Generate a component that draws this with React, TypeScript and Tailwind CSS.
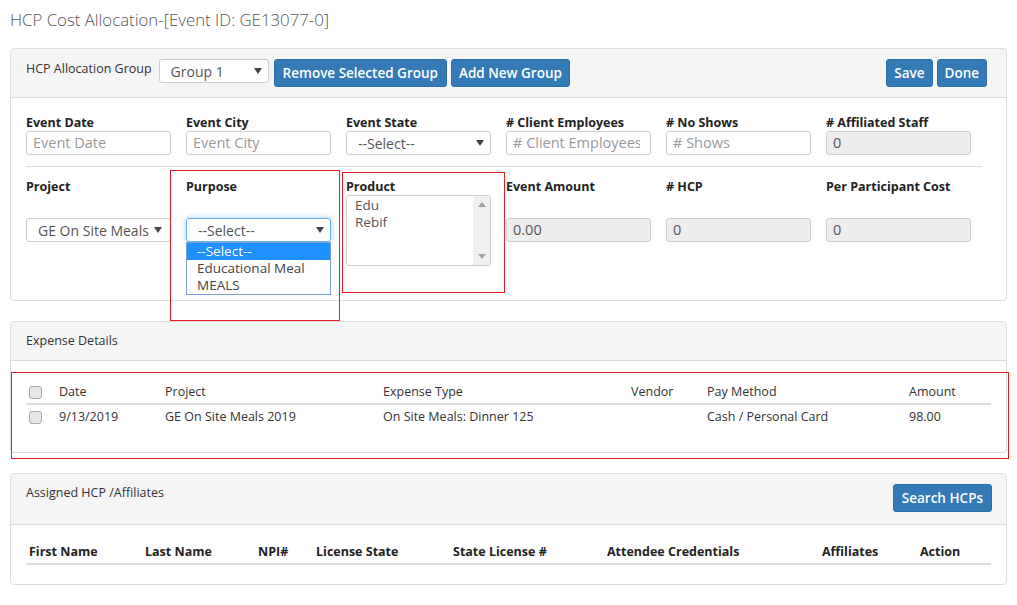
import React from "react";

const Arrow = () => (
  <svg width="8" height="6" viewBox="0 0 8 6" className="shrink-0">
    <path d="M0 0 L8 0 L4 6 Z" fill="#444" />
  </svg>
);

const Select = ({ value, className = "", focus = false }: { value: string; className?: string; focus?: boolean }) => (
  <div
    className={`flex items-center justify-between gap-[4px] h-[24px] rounded-[3px] bg-white pl-[11px] pr-[6px] text-[14px] border ${
      focus ? "border-[#66afe9] shadow-[0_0_6px_rgba(102,175,233,0.6)]" : "border-[#ccc]"
    } ${className}`}
  >
    <span className="text-[#555] whitespace-nowrap overflow-hidden">{value}</span>
    <Arrow />
  </div>
);

const Input = ({ placeholder, value, disabled = false }: { placeholder?: string; value?: string; disabled?: boolean }) => (
  <div
    className={`h-[24px] rounded-[3px] border border-[#ccc] flex items-center pl-[6px] pr-[10px] text-[14.5px] whitespace-nowrap overflow-hidden ${
      disabled ? "bg-[#eee] text-[#555]" : "bg-white text-[#999]"
    }`}
  >
    <span className="overflow-hidden">{value ?? placeholder}</span>
  </div>
);

const Label = ({ children }: { children: React.ReactNode }) => (
  <div className="h-[17px] leading-[17px] font-bold text-[#222] whitespace-nowrap">{children}</div>
);

const Btn = ({ children, className = "" }: { children: React.ReactNode; className?: string }) => (
  <div
    className={`h-[28px] px-[7px] flex items-center rounded-[3px] bg-[#337ab7] border border-[#2e6da4] text-white text-[13.5px] font-semibold whitespace-nowrap ${className}`}
  >
    {children}
  </div>
);

const Check = () => (
  <div className="w-[13px] h-[13px] rounded-[3px] border border-[#a8a8a8] bg-[#e6e6e6]" />
);

export default function App() {
  return (
    <div className="relative w-[1017px] h-[605px] overflow-hidden bg-white text-[#333] text-[12.5px] font-['Open_Sans','Noto_Sans',sans-serif]">
      <h1 className="h-[48px] px-[10px] pt-[8px] text-[16.8px] font-light text-[#555] leading-[24px]">
        HCP Cost Allocation-[Event ID: GE13077-0]
      </h1>

      {/* Panel 1 */}
      <div className="mx-[10px] border border-[#ddd] rounded-[4px]">
        <div className="h-[49px] bg-[#f5f5f5] border-b border-[#ddd] flex items-start pt-[10px] pl-[15px] pr-[19px] rounded-t-[4px]">
          <div className="leading-[18px] mt-[1px] whitespace-nowrap">HCP Allocation Group</div>
          <Select value="Group 1" className="w-[110px] ml-[7px]" />
          <Btn className="ml-[5px] px-[8px]">Remove Selected Group</Btn>
          <Btn className="ml-[4px]">Add New Group</Btn>
          <Btn className="ml-auto">Save</Btn>
          <Btn className="ml-[4px]">Done</Btn>
        </div>
        <div className="px-[15px] pt-[16px] pb-[34px]">
          <div className="grid grid-cols-[repeat(6,145px)] gap-x-[15px]">
            <div>
              <Label>Event Date</Label>
              <Input placeholder="Event Date" />
            </div>
            <div>
              <Label>Event City</Label>
              <Input placeholder="Event City" />
            </div>
            <div>
              <Label>Event State</Label>
              <Select value="--Select--" />
            </div>
            <div>
              <Label># Client Employees</Label>
              <Input placeholder="# Client Employees" />
            </div>
            <div>
              <Label># No Shows</Label>
              <Input placeholder="# Shows" />
            </div>
            <div>
              <Label># Affiliated Staff</Label>
              <Input value="0" disabled />
            </div>
          </div>
          <div className="mt-[11px] h-px bg-[#ddd] w-[956px]" />
          <div className="mt-[11px] grid grid-cols-[repeat(6,145px)] gap-x-[15px]">
            <div>
              <Label>Project</Label>
              <div className="mt-[23px]">
                <Select value="GE On Site Meals 2019" className="pr-[8px] text-[14.5px]" />
              </div>
            </div>
            <div>
              <Label>Purpose</Label>
              <div className="mt-[23px] relative">
                <Select value="--Select--" focus />
                <div className="absolute left-0 top-[24px] w-full bg-white border border-[#7a9fd8] z-10 text-[13.5px]">
                  <div className="h-[17px] leading-[17px] pl-[10px] bg-[#1e90ff] text-white">--Select--</div>
                  <div className="h-[17px] leading-[17px] pl-[10px] text-[#444]">Educational Meal</div>
                  <div className="h-[17px] leading-[17px] pl-[10px] text-[#444]">MEALS</div>
                </div>
              </div>
            </div>
            <div>
              <Label>Product</Label>
              <div className="h-[71px] border border-[#ccc] rounded-[3px] flex overflow-hidden">
                <div className="flex-1 pl-[8px] pt-[1px] text-[#555] leading-[17px] text-[13.5px]">
                  <div>Edu</div>
                  <div>Rebif</div>
                </div>
                <div className="w-[17px] bg-[#f0f0f0] flex flex-col items-center justify-between py-[6px]">
                  <svg width="8" height="5" viewBox="0 0 8 5"><path d="M0 5 L8 5 L4 0 Z" fill="#a3a3a3" /></svg>
                  <svg width="8" height="5" viewBox="0 0 8 5"><path d="M0 0 L8 0 L4 5 Z" fill="#a3a3a3" /></svg>
                </div>
              </div>
            </div>
            <div>
              <Label>Event Amount</Label>
              <div className="mt-[23px]">
                <Input value="0.00" disabled />
              </div>
            </div>
            <div>
              <Label># HCP</Label>
              <div className="mt-[23px]">
                <Input value="0" disabled />
              </div>
            </div>
            <div>
              <Label>Per Participant Cost</Label>
              <div className="mt-[23px]">
                <Input value="0" disabled />
              </div>
            </div>
          </div>
        </div>
      </div>

      {/* Panel 2 */}
      <div className="mx-[10px] mt-[20px] border border-[#ddd] rounded-[4px]">
        <div className="h-[39px] bg-[#f5f5f5] border-b border-[#ddd] flex items-center pl-[15px] rounded-t-[4px]">
          Expense Details
        </div>
        <div className="px-[15px] pt-[20px] pb-[22px]">
          <div className="grid grid-cols-[33px_106px_218px_248px_76px_202px_1fr] h-[24px] items-center border-b-2 border-[#ddd]">
            <div className="pl-[3px]"><Check /></div>
            <div>Date</div>
            <div>Project</div>
            <div>Expense Type</div>
            <div>Vendor</div>
            <div>Pay Method</div>
            <div>Amount</div>
          </div>
          <div className="grid grid-cols-[33px_106px_218px_248px_76px_202px_1fr] h-[25px] items-center">
            <div className="pl-[3px]"><Check /></div>
            <div>9/13/2019</div>
            <div>GE On Site Meals 2019</div>
            <div>On Site Meals: Dinner 125</div>
            <div></div>
            <div>Cash / Personal Card</div>
            <div>98.00</div>
          </div>
        </div>
      </div>

      {/* Panel 3 */}
      <div className="mx-[10px] mt-[20px] border border-[#ddd] rounded-[4px]">
        <div className="h-[51px] bg-[#f5f5f5] border-b border-[#ddd] flex items-start justify-between pt-[10px] pl-[15px] pr-[14px] rounded-t-[4px]">
          <div className="leading-[18px]">Assigned HCP /Affiliates</div>
          <Btn className="px-[8px]">Search HCPs</Btn>
        </div>
        <div className="px-[15px] pt-[16px] pb-[19px]">
          <div className="grid grid-cols-[116px_113px_58px_137px_154px_215px_98px_1fr] h-[24px] items-center border-b-2 border-[#ddd] font-bold text-[#222]">
            <div className="pl-[3px]">First Name</div>
            <div className="pl-[3px]">Last Name</div>
            <div className="pl-[3px]">NPI#</div>
            <div className="pl-[3px]">License State</div>
            <div className="pl-[3px]">State License #</div>
            <div className="pl-[3px]">Attendee Credentials</div>
            <div className="pl-[3px]">Affiliates</div>
            <div className="pl-[3px]">Action</div>
          </div>
        </div>
      </div>

      {/* Annotation boxes */}
      <div className="absolute left-[170px] top-[170px] w-[170px] h-[151px] border border-[#ed1c24] pointer-events-none" />
      <div className="absolute left-[342px] top-[172px] w-[163px] h-[121px] border border-[#ed1c24] pointer-events-none" />
      <div className="absolute left-[11px] top-[372px] w-[998px] h-[87px] border border-[#ed1c24] pointer-events-none" />
    </div>
  );
}
